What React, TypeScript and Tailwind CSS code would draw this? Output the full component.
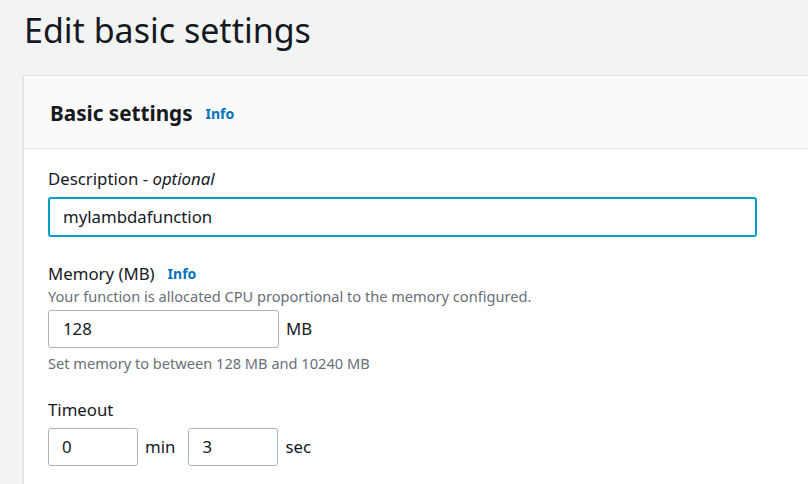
const Info = () => (
  <a className="ml-[13px] text-[14px] font-bold text-[#0073bb] cursor-pointer">Info</a>
);

const App = () => {
  return (
    <div
      className="w-[808px] h-[484px] overflow-hidden bg-[#f2f3f3] text-[#16191f]"
      style={{ fontFamily: '"Noto Sans", "Open Sans", Arial, sans-serif' }}
    >
      <h1 className="pl-[24px] pt-[6px] text-[34px] leading-[48px] font-normal">
        Edit basic settings
      </h1>

      <div className="mt-[21px] ml-[23px] w-[840px] bg-white border-l border-t border-[#e2e4e4] shadow-[0_1px_1px_0_rgba(0,28,36,0.3)]">
        <div className="h-[73px] bg-[#fafafa] border-b border-[#eaeded] flex items-center pl-[26px] pt-[2px]">
          <h2 className="text-[20.7px] font-bold leading-none">Basic settings</h2>
          <Info />
        </div>

        <div className="pl-[24px] pt-[19px] text-[16.8px]">
          <label className="block leading-[22px]">
            Description - <i>optional</i>
          </label>
          <div className="mt-[7px] w-[709px] h-[40px] border-2 border-[#00a1c9] rounded-[3px] flex items-center pl-[13px]">
            mylambdafunction
          </div>

          <div className="mt-[26px] flex items-center leading-[22px]">
            Memory (MB)
            <Info />
          </div>
          <p className="mt-[1px] text-[14.6px] leading-[21px] text-[#687078]">
            Your function is allocated CPU proportional to the memory configured.
          </p>
          <div className="mt-[3px] flex items-center">
            <div className="w-[231px] h-[38px] border border-[#aab7b8] rounded-[3px] flex items-center pl-[14px]">
              128
            </div>
            <span className="ml-[7px]">MB</span>
          </div>
          <p className="mt-[5px] text-[14.6px] leading-[21px] text-[#687078]">
            Set memory to between 128 MB and 10240 MB
          </p>

          <div className="mt-[25px] leading-[22px]">Timeout</div>
          <div className="mt-[7px] flex items-center">
            <div className="w-[90px] h-[38px] border border-[#aab7b8] rounded-[3px] flex items-center pl-[13px]">
              0
            </div>
            <span className="ml-[7px]">min</span>
            <div className="ml-[13px] w-[90px] h-[38px] border border-[#aab7b8] rounded-[3px] flex items-center pl-[13px]">
              3
            </div>
            <span className="ml-[7px]">sec</span>
          </div>
          <div className="h-[40px]" />
        </div>
      </div>
    </div>
  );
};

export default App;
